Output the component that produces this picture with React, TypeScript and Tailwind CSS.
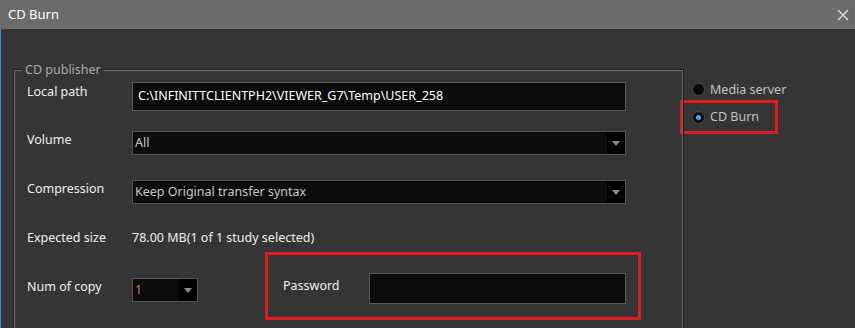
import React from "react";

const font = { fontFamily: '"Noto Sans", "Open Sans", sans-serif' };

function Arrow() {
  return (
    <svg width="8" height="5" viewBox="0 0 8 5" className="block">
      <path d="M0 0h8L4 5z" fill="#8c8c8c" />
    </svg>
  );
}

function Select({ value, width, valueClass }: { value: string; width: string; valueClass?: string }) {
  return (
    <div className={`flex h-[24px] ${width} border border-[#555] bg-[#0c0c0c]`}>
      <div className={`flex-1 pl-[2px] pt-[3px] leading-[16px] ${valueClass ?? "text-[#c6c6c6]"}`}>{value}</div>
      <div className="flex w-[18px] items-center justify-center bg-black">
        <Arrow />
      </div>
    </div>
  );
}

function Radio({ checked }: { checked?: boolean }) {
  return (
    <div className="flex h-[13px] w-[13px] items-center justify-center rounded-full border border-[#4a4a4a] bg-[#0a0a0a]">
      {checked && <div className="h-[5px] w-[5px] rounded-full bg-[#49a2ff]" />}
    </div>
  );
}

export default function App() {
  return (
    <div className="h-[328px] w-[855px] overflow-hidden bg-[#353535] text-[12.5px] text-[#efefef]" style={font}>
      {/* title bar */}
      <div className="flex h-[29px] items-center justify-between bg-[#6b6b6b] pl-[8px] pr-[6px]">
        <span className="text-[13px] text-white">CD Burn</span>
        <svg width="12" height="12" viewBox="0 0 12 12">
          <path d="M1 1L11 11M11 1L1 11" stroke="#d4d4d4" strokeWidth="1.6" />
        </svg>
      </div>

      <div className="flex h-[299px] border-l border-[#3a8ee6] pl-[13px]">
        {/* group box */}
        <div className="relative mt-[41px] w-[669px] self-start border border-[#6a6a6a] shadow-[0_0_0_1px_#1c1c1c] pl-[12px] pt-[11px] pb-[20px]">
          <span className="absolute left-[7px] top-[-9px] bg-[#353535] px-[3px] leading-[16px] text-[#a9a9a9]">CD publisher</span>

          <div className="flex h-[29px] items-start">
            <div className="w-[105px] pt-[2px] leading-[16px]">Local path</div>
            <div className="flex h-[29px] w-[494px] items-center border border-[#5a5a5a] bg-[#0c0c0c] pl-[5px] text-white">
              C:\INFINITTCLIENTPH2\VIEWER_G7\Temp\USER_258
            </div>
          </div>

          <div className="mt-[20px] flex h-[24px] items-start">
            <div className="w-[105px] pt-[1px] leading-[16px]">Volume</div>
            <Select value="All" width="w-[494px]" />
          </div>

          <div className="mt-[25px] flex h-[24px] items-start">
            <div className="w-[105px] pt-[1px] leading-[16px]">Compression</div>
            <Select value="Keep Original transfer syntax" width="w-[494px]" />
          </div>

          <div className="mt-[22px] flex h-[24px] items-center">
            <div className="w-[105px] leading-[16px]">Expected size</div>
            <div>78.00 MB(1 of 1 study selected)</div>
          </div>

          <div className="mt-[2px] flex items-start">
            <div className="mt-[27px] w-[105px] leading-[16px]">Num of copy</div>
            <div className="mt-[26px]">
              <Select value="1" width="w-[66px]" valueClass="text-[#c9874a]" />
            </div>
            <div className="ml-[67px] flex h-[68px] w-[376px] items-center border-[3px] border-[#e21c1c] pl-[15px]">
              <div className="w-[86px] leading-[16px]">Password</div>
              <div className="mt-[5px] h-[31px] w-[257px] border border-[#5a5a5a] bg-[#0c0c0c]" />
            </div>
          </div>
        </div>

        {/* right column */}
        <div className="-ml-[3px] mt-[50px] flex flex-col self-start text-[#c2c2c2]">
          <div className="flex h-[21px] items-center pl-[12px]">
            <Radio />
            <span className="ml-[5px] leading-[16px]">Media server</span>
          </div>
          <div className="flex h-[34px] w-[98px] items-center border-[3px] border-[#e21c1c] pl-[9px]">
            <Radio checked />
            <span className="ml-[5px] leading-[16px]">CD Burn</span>
          </div>
        </div>
      </div>
    </div>
  );
}
